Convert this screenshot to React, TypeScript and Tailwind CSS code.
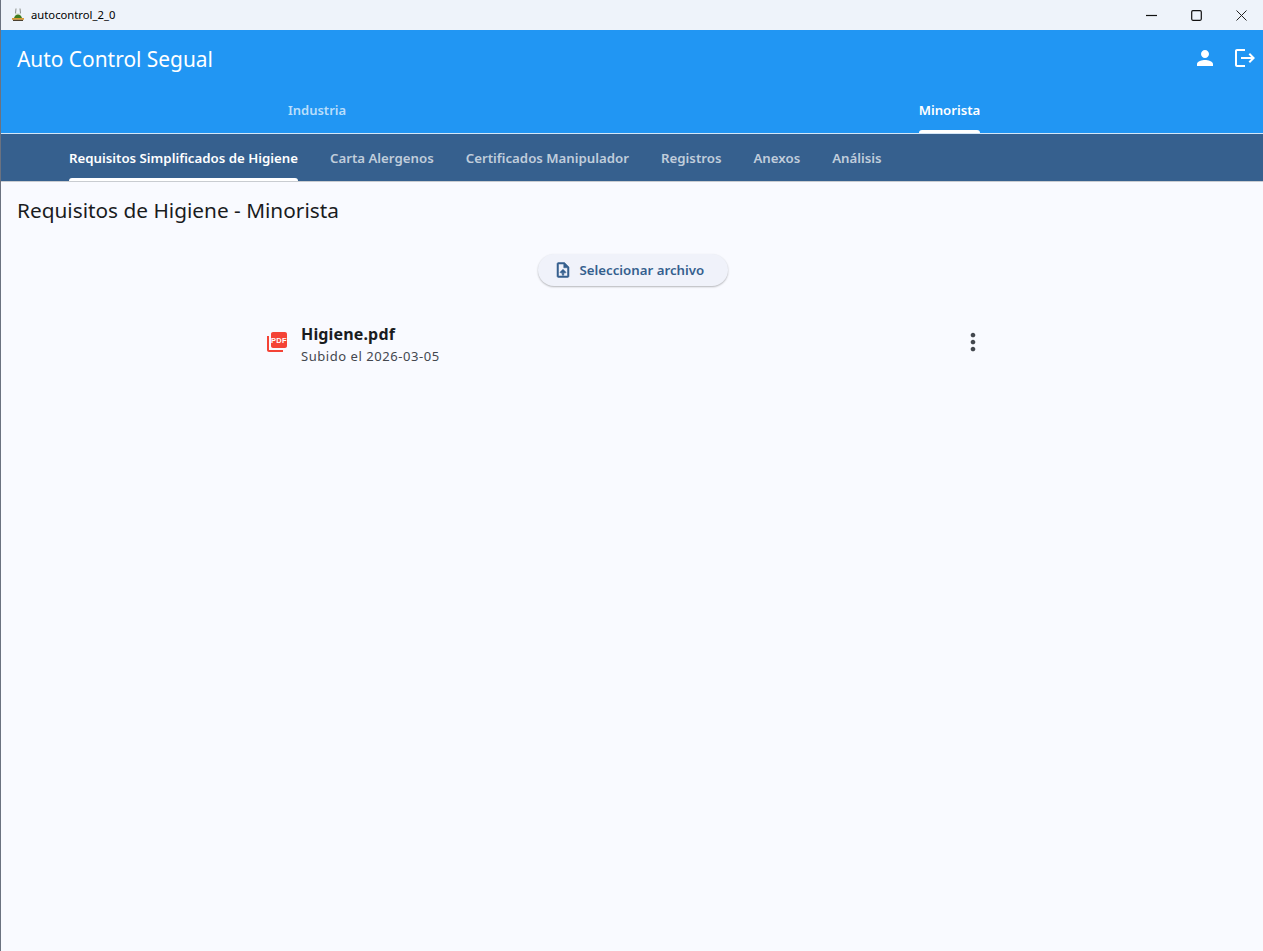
const subTabs = [
  "Requisitos Simplificados de Higiene",
  "Carta Alergenos",
  "Certificados Manipulador",
  "Registros",
  "Anexos",
  "Análisis",
];

function AppIcon() {
  return (
    <svg width="16" height="16" viewBox="0 0 16 16" className="shrink-0">
      <path d="M6 1.500l-.5 5M10 1.500l.5 5" stroke="#8a8f8a" strokeWidth="1" fill="none" />
      <path d="M2.500 13.500L6 6h4l3.500 7.500z" fill="#dfe6dc" />
      <path d="M4 11c.8-2.500 2.500-3.500 4-3.500s3.200 1 4 3.500z" fill="#3f7d20" />
      <path d="M2 11h12v1.800H2z" fill="#d99a35" />
      <path d="M3 12.800h10V14H3z" fill="#4a4030" />
    </svg>
  );
}

function PdfIcon() {
  return (
    <svg width="24" height="24" viewBox="0 0 24 24" className="shrink-0">
      <path
        fill="#f44336"
        d="M20 2H8c-1.100 0-2 .9-2 2v12c0 1.100.9 2 2 2h12c1.100 0 2-.9 2-2V4c0-1.100-.9-2-2-2zM4 6H2v14c0 1.100.9 2 2 2h14v-2H4V6z"
      />
      <text x="14" y="12.700" textAnchor="middle" fontSize="7.500" fontWeight="700" letterSpacing="0.4" fill="#fff" fontFamily="'Liberation Sans', sans-serif">
        PDF
      </text>
    </svg>
  );
}

function UploadFileIcon() {
  return (
    <svg width="18" height="18" viewBox="0 0 24 24" className="shrink-0" fill="#355f8e" stroke="#355f8e" strokeWidth="0.7">
      <path d="M14 2H6c-1.100 0-2 .9-2 2v16c0 1.100.9 2 2 2h12c1.100 0 2-.9 2-2V8l-6-6zm4 18H6V4h7v5h5v11zM8 15.010l1.410 1.410L11 14.840V19h2v-4.160l1.590 1.590L16 15.010 12.010 11 8 15.010z" />
    </svg>
  );
}

function PersonIcon() {
  return (
    <svg width="24" height="24" viewBox="0 0 24 24" fill="white" className="shrink-0">
      <path d="M12 12c2.210 0 4-1.790 4-4s-1.790-4-4-4-4 1.790-4 4 1.790 4 4 4zm0 2c-2.670 0-8 1.340-8 4v2h16v-2c0-2.660-5.330-4-8-4z" />
    </svg>
  );
}

function LogoutIcon() {
  return (
    <svg width="24" height="24" viewBox="0 0 24 24" fill="white" className="shrink-0">
      <path d="M17 7l-1.410 1.410L18.170 11H8v2h10.170l-2.580 2.580L17 17l5-5zM4 5h8V3H4c-1.100 0-2 .9-2 2v14c0 1.100.9 2 2 2h8v-2H4V5z" />
    </svg>
  );
}

function MoreVertIcon() {
  return (
    <svg width="28" height="28" viewBox="0 0 24 24" fill="#43474e" className="shrink-0">
      <path d="M12 8c1.100 0 2-.9 2-2s-.9-2-2-2-2 .9-2 2 .9 2 2 2zm0 2c-1.100 0-2 .9-2 2s.9 2 2 2 2-.9 2-2-.9-2-2-2zm0 6c-1.100 0-2 .9-2 2s.9 2 2 2 2-.9 2-2-.9-2-2-2z" />
    </svg>
  );
}

export default function App() {
  return (
    <div className="flex h-[951px] w-full flex-col overflow-hidden border-l border-[#6b7280] bg-[#f9faff] font-['Noto_Sans','Open_Sans',sans-serif]">
      {/* window title bar */}
      <div className="flex h-[30px] shrink-0 items-center bg-[#eef3fa] pl-[9px]">
        <AppIcon />
        <span className="ml-[5px] text-[11.250px] text-black">autocontrol_2_0</span>
        <div className="ml-auto flex items-center gap-[34px] pr-[16px]">
          <svg width="11" height="11" viewBox="0 0 11 11"><path d="M0 5.500h11" stroke="#111" strokeWidth="1.200" /></svg>
          <svg width="11" height="11" viewBox="0 0 11 11"><rect x="0.700" y="0.700" width="9.600" height="9.600" rx="1.200" fill="none" stroke="#111" strokeWidth="1.200" /></svg>
          <svg width="11" height="11" viewBox="0 0 11 11"><path d="M.5.500l10 10M10.500.500l-10 10" stroke="#222" strokeWidth="1" /></svg>
        </div>
      </div>

      {/* app bar */}
      <div className="shrink-0 bg-[#2196f3]">
        <div className="flex h-[58px] items-center pl-4 pr-[6px] text-white">
          <h1 className="text-[20.900px] leading-none">Auto Control Segual</h1>
          <div className="-mt-[2px] ml-auto flex items-center gap-4">
            <PersonIcon />
            <LogoutIcon />
          </div>
        </div>
        <div className="flex h-[46px] border-b border-[#d4e7f8]">
          <div className="flex w-1/2 justify-center pt-[12px] pl-[1px] text-[13px] leading-[20px] font-semibold text-white/70">Industria</div>
          <div className="flex w-1/2 justify-center pt-[12px] pl-[4px] text-[13.200px] leading-[20px] font-semibold text-white">
            <span className="relative h-[33px]">
              Minorista
              <span className="absolute inset-x-0 bottom-0 h-[3px] rounded-t-[3px] bg-white" />
            </span>
          </div>
        </div>
      </div>

      {/* secondary tabs */}
      <div className="flex h-[48px] shrink-0 gap-8 border-b border-[#c9ccd1] bg-[#36608e] pl-[68px]">
        {subTabs.map((tab, i) => (
          <div
            key={tab}
            className={`relative pt-[14px] text-[13.250px] leading-[20px] font-semibold ${i === 0 ? "text-white" : "text-white/70"}`}
          >
            {tab}
            {i === 0 && <span className="absolute inset-x-0 bottom-0 h-[3px] rounded-t-[3px] bg-white" />}
          </div>
        ))}
      </div>

      {/* content */}
      <main className="flex flex-1 flex-col">
        <h2 className="pt-[14px] pl-4 text-[20.800px] leading-[28px] text-[#1a1c1e]">Requisitos de Higiene - Minorista</h2>

        <div className="flex justify-center pt-[30px] pl-[1px]">
          <button className="flex h-[32px] w-[190px] items-center rounded-full bg-[#f0f2fa] pl-[16px] text-[13.250px] font-semibold text-[#355f8e] shadow-[0_1px_2px_rgba(0,0,0,0.28)]">
            <UploadFileIcon />
            <span className="ml-[8px] pt-[2px]">Seleccionar archivo</span>
          </button>
        </div>

        <div className="mt-[36px] ml-[264px] flex w-[722px] items-center">
          <div className="mb-[4px]"><PdfIcon /></div>
          <div className="ml-[12px]">
            <div className="text-[16px] leading-[24px] font-bold tracking-[0.15px] text-[#1a1c1e]">Higiene.pdf</div>
            <div className="text-[13px] leading-[20px] tracking-[0.55px] text-[#43474e]">Subido el 2026-03-05</div>
          </div>
          <div className="mb-[4px] ml-auto"><MoreVertIcon /></div>
        </div>
      </main>
    </div>
  );
}
